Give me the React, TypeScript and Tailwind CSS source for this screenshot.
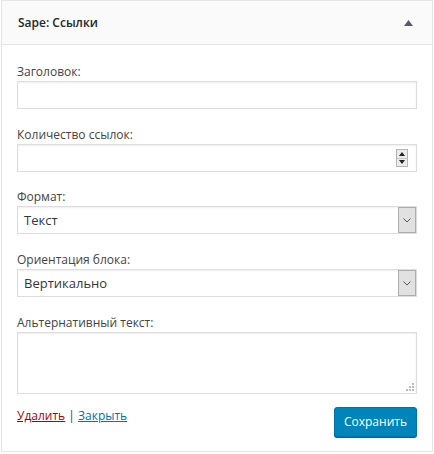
import React from 'react';

const font = { fontFamily: '"Open Sans", "Noto Sans", sans-serif' };

function Field({ label, className, children }: { label: string; className?: string; children: React.ReactNode }) {
  return (
    <div className={className}>
      <div className="h-[18px] text-[12px] leading-[18px] text-[#444]">{label}</div>
      {children}
    </div>
  );
}

function TextBox({ spinner }: { spinner?: boolean }) {
  return (
    <div className="relative h-[28px] w-full border border-[#ddd] bg-white shadow-[inset_0_1px_2px_rgba(0,0,0,0.07)]">
      {spinner && (
        <div className="absolute right-[8px] top-[4px] flex h-[18px] w-[12px] flex-col border border-[#b5b5b5] bg-[#ececec]">
          <div className="flex flex-1 items-center justify-center border-b border-[#c8c8c8]">
            <svg width="6" height="4" viewBox="0 0 6 4">
              <polygon points="3,0 6,4 0,4" fill="#222" />
            </svg>
          </div>
          <div className="flex flex-1 items-center justify-center">
            <svg width="6" height="4" viewBox="0 0 6 4">
              <polygon points="0,0 6,0 3,4" fill="#222" />
            </svg>
          </div>
        </div>
      )}
    </div>
  );
}

function Select({ value }: { value: string }) {
  return (
    <div className="flex h-[28px] w-full items-stretch border border-[#ddd] bg-white shadow-[inset_0_1px_2px_rgba(0,0,0,0.07)]">
      <div className="flex-1 pl-[6px] text-[13px] leading-[26px] text-[#32373c]">{value}</div>
      <div className="flex w-[18px] items-center justify-center border border-[#adadad] bg-[#e1e1e1]">
        <svg width="8" height="5" viewBox="0 0 8 5">
          <polyline points="0.5,0.5 4,4 7.5,0.5" fill="none" stroke="#555" strokeWidth="1" />
        </svg>
      </div>
    </div>
  );
}

export default function App() {
  return (
    <div className="bg-white pl-[1px]" style={font}>
      <div className="w-[432px] border border-[#e5e5e5] bg-white">
        {/* Header */}
        <div className="flex h-[44px] items-center justify-between border-b border-[#e5e5e5] bg-[#fafafa] pl-[16px] pr-[16px]">
          <div className="text-[12px] font-semibold text-[#23282d]">Sape: Ссылки</div>
          <svg width="9" height="6" viewBox="0 0 9 6" className="mr-[3px]">
            <polygon points="4.5,0 9,6 0,6" fill="#555d66" />
          </svg>
        </div>

        {/* Body */}
        <div className="px-[15px] pt-[18px] pb-[14px]">
          <Field label="Заголовок:">
            <TextBox />
          </Field>
          <Field label="Количество ссылок:" className="mt-[17px]">
            <TextBox spinner />
          </Field>
          <Field label="Формат:" className="mt-[16px]">
            <Select value="Текст" />
          </Field>
          <Field label="Ориентация блока:" className="mt-[17px]">
            <Select value="Вертикально" />
          </Field>
          <Field label="Альтернативный текст:" className="mt-[17px]">
            <div className="relative h-[62px] w-full border border-[#ddd] bg-white shadow-[inset_0_1px_2px_rgba(0,0,0,0.07)]">
              <svg width="9" height="9" viewBox="0 0 9 9" className="absolute bottom-[2px] right-[2px]">
                <rect x="7" y="1" width="2" height="2" fill="#bbb" />
                <rect x="4" y="4" width="2" height="2" fill="#bbb" />
                <rect x="7" y="4" width="2" height="2" fill="#bbb" />
                <rect x="1" y="7" width="2" height="2" fill="#bbb" />
                <rect x="4" y="7" width="2" height="2" fill="#bbb" />
                <rect x="7" y="7" width="2" height="2" fill="#bbb" />
              </svg>
            </div>
          </Field>

          {/* Actions */}
          <div className="mt-[13px] flex items-start justify-between">
            <div className="text-[12px] leading-[18px] text-[#444]">
              <a href="#" className="text-[#a00] underline">Удалить</a>
              <span> | </span>
              <a href="#" className="text-[#0073aa] underline">Закрыть</a>
            </div>
            <button className="h-[30px] rounded-[3px] border border-[#0073aa] bg-[#0085ba] px-[9px] text-[12px] text-white shadow-[0_1px_0_#006799]">
              Сохранить
            </button>
          </div>
        </div>
      </div>
    </div>
  );
}
